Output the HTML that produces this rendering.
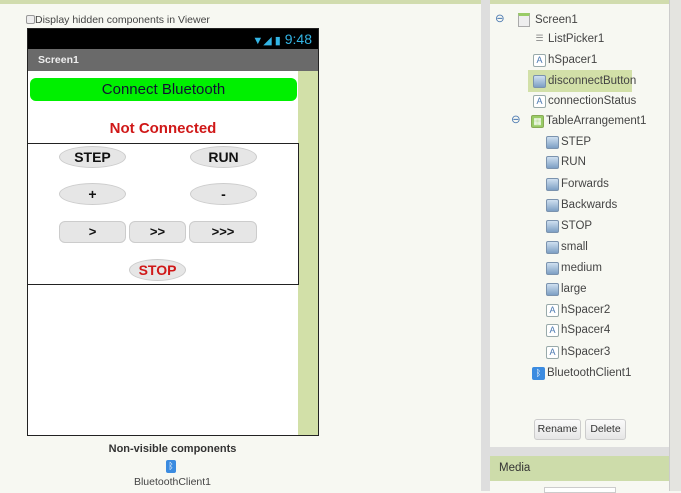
<!DOCTYPE html><html><head><style>
*{margin:0;padding:0;box-sizing:border-box}
body{width:681px;height:491px;overflow:hidden;background:#f7f8f2;font-family:"Liberation Sans",sans-serif;position:relative;font-size:11px;color:#333}
.a{position:absolute}
.pill{position:absolute;background:#e6e6e6;border:1px solid #ccc;border-radius:50%;font-weight:bold;font-size:14px;text-align:center;color:#111}
.rb{position:absolute;background:#e6e6e6;border:1px solid #ccc;border-radius:6px;font-weight:bold;font-size:13px;text-align:center;color:#111;height:22px;line-height:20px}
.t{position:absolute;font-size:11.5px;color:#444;white-space:nowrap;height:16px;line-height:16px;display:flex;align-items:center}
.ib,.ia{flex:none;width:13px;height:13px;margin-right:2px;border-radius:2px}
.ib{background:linear-gradient(#cfe0f0,#7d9fc4);border:1px solid #7b93ae}
.ia{border:1px solid #9aa;background:#fff;color:#4a78b0;font-size:9px;line-height:11px;text-align:center}
</style></head><body>
<div class="a" style="left:0;top:0;width:681px;height:4px;background:#d1dcae"></div>
<div class="a" style="left:481px;top:0;width:9px;height:491px;background:#dedede"></div>
<div class="a" style="left:669px;top:0;width:12px;height:491px;background:#e4e4e0;border-left:1px solid #ccc"></div>
<div class="a" style="left:26px;top:14px;font-size:10.5px;color:#444"><span style="display:inline-block;width:9px;height:9px;border:1px solid #999;border-radius:2px;background:#eee;vertical-align:-1px"></span>Display hidden components in Viewer</div>
<div class="a" style="left:27px;top:28px;width:292px;height:408px;border:1px solid #222;background:#fff">
 <div class="a" style="left:0;top:0;width:290px;height:20px;background:#000;color:#33b5e5;font-size:14px;text-align:right;padding-right:6px;line-height:20px"><span style="font-size:11px">▼◢ ▮</span> 9:48</div>
 <div class="a" style="left:0;top:20px;width:290px;height:22px;background:#6a6a6a;color:#eee;font-size:10.5px;font-weight:bold;line-height:22px;padding-left:10px">Screen1</div>
 <div class="a" style="left:270px;top:42px;width:20px;height:364px;background:#d2e0a8"></div>
 <div class="a" style="left:2px;top:49px;width:267px;height:23px;background:#00f000;border-radius:6px;text-align:center;font-size:15px;line-height:23px;color:#113">Connect Bluetooth</div>
 <div class="a" style="left:0;top:91px;width:270px;text-align:center;color:#d01818;font-weight:bold;font-size:15px">Not Connected</div>
 <div class="a" style="left:-1px;top:114px;width:272px;height:142px;border:1px solid #222"></div>
 <div class="pill" style="left:31px;top:117px;width:67px;height:22px;line-height:20px">STEP</div>
 <div class="pill" style="left:162px;top:117px;width:67px;height:22px;line-height:20px">RUN</div>
 <div class="pill" style="left:31px;top:154px;width:67px;height:22px;line-height:20px">+</div>
 <div class="pill" style="left:162px;top:154px;width:67px;height:22px;line-height:20px">-</div>
 <div class="rb" style="left:31px;top:192px;width:67px">&gt;</div>
 <div class="rb" style="left:101px;top:192px;width:57px">&gt;&gt;</div>
 <div class="rb" style="left:161px;top:192px;width:68px">&gt;&gt;&gt;</div>
 <div class="pill" style="left:101px;top:230px;width:57px;height:22px;line-height:20px;color:#d01818">STOP</div>
</div>
<div class="a" style="left:0;top:443px;width:345px;text-align:center;font-weight:bold;font-size:11px;color:#333">Non-visible components</div>
<div class="a" style="left:166px;top:460px;width:10px;height:13px;background:#3b8be0;border-radius:2px;color:#fff;font-size:9px;text-align:center;line-height:13px">ᛒ</div>
<div class="a" style="left:0;top:476px;width:345px;text-align:center;font-size:10.5px;color:#444">BluetoothClient1</div>
<div class="t" style="left:495px;top:11px;color:#4a78b0">⊖</div>
<div class="t" style="left:518px;top:12px"><span style="flex:none;width:12px;height:14px;border:1px solid #aaa;border-top:3px solid #9c6;background:#eee;margin-right:5px"></span>Screen1</div>
<div class="t" style="left:533px;top:31px"><span class="ia" style="color:#888;border:none;background:none">☰</span>ListPicker1</div>
<div class="t" style="left:533px;top:52px"><span class="ia">A</span>hSpacer1</div>
<div class="a" style="left:528px;top:70px;width:104px;height:22px;background:#d2e0a8"></div>
<div class="t" style="left:533px;top:73px"><span class="ib"></span>disconnectButton</div>
<div class="t" style="left:533px;top:93px"><span class="ia">A</span>connectionStatus</div>
<div class="t" style="left:511px;top:112px;color:#4a78b0">⊖</div>
<div class="t" style="left:531px;top:113px"><span class="ia" style="background:#9c6;border-color:#8a5;color:#fff">▦</span>TableArrangement1</div>
<div class="t" style="left:546px;top:134px"><span class="ib"></span>STEP</div>
<div class="t" style="left:546px;top:154px"><span class="ib"></span>RUN</div>
<div class="t" style="left:546px;top:176px"><span class="ib"></span>Forwards</div>
<div class="t" style="left:546px;top:197px"><span class="ib"></span>Backwards</div>
<div class="t" style="left:546px;top:218px"><span class="ib"></span>STOP</div>
<div class="t" style="left:546px;top:239px"><span class="ib"></span>small</div>
<div class="t" style="left:546px;top:260px"><span class="ib"></span>medium</div>
<div class="t" style="left:546px;top:281px"><span class="ib"></span>large</div>
<div class="t" style="left:546px;top:302px"><span class="ia">A</span>hSpacer2</div>
<div class="t" style="left:546px;top:322px"><span class="ia">A</span>hSpacer4</div>
<div class="t" style="left:546px;top:344px"><span class="ia">A</span>hSpacer3</div>
<div class="t" style="left:532px;top:365px"><span class="ia" style="background:#3b8be0;border-color:#3b8be0;color:#fff">ᛒ</span>BluetoothClient1</div>
<div class="a" style="left:534px;top:419px;width:47px;height:21px;border:1px solid #ccc;border-radius:3px;background:linear-gradient(#fafafa,#e6e6e6);text-align:center;line-height:19px;font-size:10.5px">Rename</div>
<div class="a" style="left:585px;top:419px;width:41px;height:21px;border:1px solid #ccc;border-radius:3px;background:linear-gradient(#fafafa,#e6e6e6);text-align:center;line-height:19px;font-size:10.5px">Delete</div>
<div class="a" style="left:490px;top:447px;width:179px;height:9px;background:#dedede"></div>
<div class="a" style="left:490px;top:456px;width:179px;height:25px;background:#cddcaa;padding-left:9px;line-height:25px;font-size:11.5px;color:#333">Media</div>
<div class="a" style="left:544px;top:487px;width:72px;height:6px;border:1px solid #ccc;background:#fff"></div>
</body></html>
